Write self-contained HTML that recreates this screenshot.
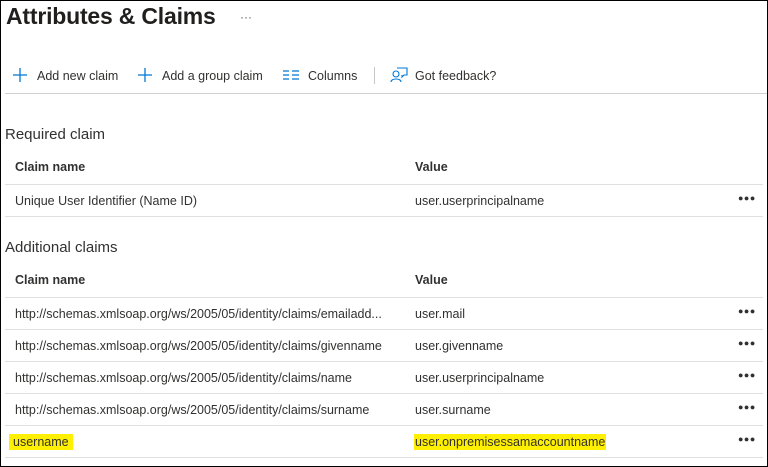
<!DOCTYPE html><html><head><style>
body{margin:0;width:768px;height:467px;overflow:hidden;background:#fff;font-family:"Liberation Sans",sans-serif;color:#323130;position:relative}
#f{position:absolute;left:0;top:0;width:766px;height:465px;border:1px solid #000}
.a{position:absolute;white-space:nowrap}
.t{font-size:12.5px;line-height:16px}
.h{font-weight:bold;font-size:12.5px}
.l{position:absolute;left:5px;width:758px;height:1px;background:#e1dfdd}
.d{position:absolute;left:738px;font-size:9px;letter-spacing:0.5px;color:#323130}
.y{background:#ffef00}
</style></head><body><div id="f"></div>
<div class="a" style="left:6px;top:3px;font-size:23px;font-weight:bold;color:#201f1e;letter-spacing:-0.2px">Attributes &amp; Claims</div>
<div class="a" style="left:240px;top:10px;font-size:12px;color:#605e5c">···</div>
<svg class="a" style="left:13px;top:68px" width="14" height="14"><path d="M7 0V14M0 7H14" stroke="#0078d4" stroke-width="1.3"/></svg>
<div class="a t" style="left:37px;top:68px">Add new claim</div>
<svg class="a" style="left:138px;top:68px" width="14" height="14"><path d="M7 0V14M0 7H14" stroke="#0078d4" stroke-width="1.3"/></svg>
<div class="a t" style="left:162px;top:68px">Add a group claim</div>
<svg class="a" style="left:283px;top:70px" width="16" height="10"><path d="M0 1H6M0 5H6M0 9H6M9 1H16M9 5H16M9 9H16" stroke="#0078d4" stroke-width="1.2"/></svg>
<div class="a t" style="left:308px;top:68px">Columns</div>
<div class="a" style="left:374px;top:67px;width:1px;height:17px;background:#c8c6c4"></div>
<svg class="a" style="left:390px;top:66px" width="18" height="18"><circle cx="6" cy="8" r="3" fill="none" stroke="#0078d4" stroke-width="1.1"/><path d="M1 16C1 12 11 12 11 16M7 2H17V9H14L12 11V9" fill="none" stroke="#0078d4" stroke-width="1.1"/></svg>
<div class="a t" style="left:415px;top:68px">Got feedback?</div>
<div class="l" style="top:93px;left:5px;width:762px;background:#d2d0ce"></div>
<div class="a" style="left:5px;top:126px;font-size:15px">Required claim</div>
<div class="a h" style="left:15px;top:160px">Claim name</div><div class="a h" style="left:415px;top:160px">Value</div>
<div class="l" style="top:184px"></div>
<div class="a t" style="left:15px;top:193px">Unique User Identifier (Name ID)</div><div class="a t" style="left:415px;top:193px">user.userprincipalname</div><div class="d" style="top:193px">●●●</div>
<div class="l" style="top:216px"></div>
<div class="a" style="left:5px;top:239px;font-size:15px">Additional claims</div>
<div class="a h" style="left:15px;top:273px">Claim name</div><div class="a h" style="left:415px;top:273px">Value</div>
<div class="l" style="top:297px"></div>
<div class="a t" style="left:15px;top:306px">http://schemas.xmlsoap.org/ws/2005/05/identity/claims/emailadd...</div><div class="a t" style="left:415px;top:306px">user.mail</div><div class="d" style="top:306px">●●●</div>
<div class="l" style="top:329px"></div>
<div class="a t" style="left:15px;top:338px">http://schemas.xmlsoap.org/ws/2005/05/identity/claims/givenname</div><div class="a t" style="left:415px;top:338px">user.givenname</div><div class="d" style="top:338px">●●●</div>
<div class="l" style="top:361px"></div>
<div class="a t" style="left:15px;top:370px">http://schemas.xmlsoap.org/ws/2005/05/identity/claims/name</div><div class="a t" style="left:415px;top:370px">user.userprincipalname</div><div class="d" style="top:370px">●●●</div>
<div class="l" style="top:393px"></div>
<div class="a t" style="left:15px;top:402px">http://schemas.xmlsoap.org/ws/2005/05/identity/claims/surname</div><div class="a t" style="left:415px;top:402px">user.surname</div><div class="d" style="top:402px">●●●</div>
<div class="l" style="top:425px"></div>
<div class="a t y" style="left:9px;top:434px;padding:0 4px">username</div><div class="a t y" style="left:414px;top:434px;padding:0 1px">user.onpremisessamaccountname</div><div class="d" style="top:434px">●●●</div>
<div class="l" style="top:457px"></div>
</body></html>
